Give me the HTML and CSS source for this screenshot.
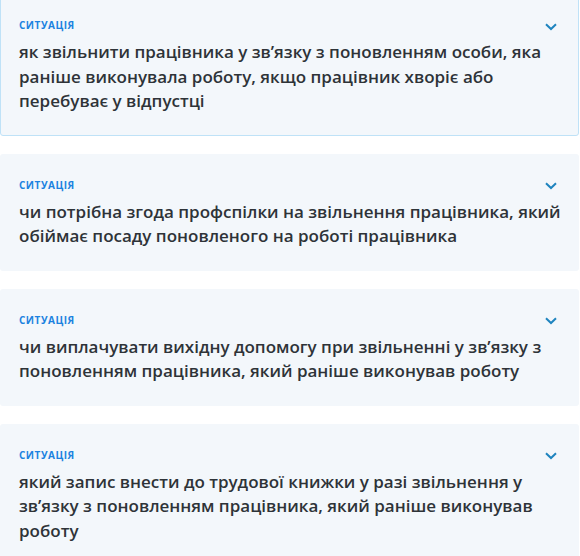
FILE: index.html
```html
<!DOCTYPE html>
<html lang="uk">
<head>
<meta charset="utf-8">
<link rel="stylesheet" href="styles.css">
</head>
<body>
<div class="list">
  <div class="card card-active">
    <div class="head">
      <span class="label">Ситуація</span>
      <svg class="chev" width="12" height="8" viewBox="0 0 12 8"><path d="M1 1.2 L6 6 L11 1.2" fill="none" stroke="#1f84bf" stroke-width="2"/></svg>
    </div>
    <div class="title">як звільнити працівника у зв’язку з поновленням особи, яка раніше виконувала роботу, якщо працівник хворіє або перебуває у відпустці</div>
  </div>
  <div class="card">
    <div class="head">
      <span class="label">Ситуація</span>
      <svg class="chev" width="12" height="8" viewBox="0 0 12 8"><path d="M1 1.2 L6 6 L11 1.2" fill="none" stroke="#1f84bf" stroke-width="2"/></svg>
    </div>
    <div class="title">чи потрібна згода профспілки на звільнення працівника, який обіймає посаду поновленого на роботі працівника</div>
  </div>
  <div class="card">
    <div class="head">
      <span class="label">Ситуація</span>
      <svg class="chev" width="12" height="8" viewBox="0 0 12 8"><path d="M1 1.2 L6 6 L11 1.2" fill="none" stroke="#1f84bf" stroke-width="2"/></svg>
    </div>
    <div class="title">чи виплачувати вихідну допомогу при звільненні у зв’язку з поновленням працівника, який раніше виконував роботу</div>
  </div>
  <div class="card">
    <div class="head">
      <span class="label">Ситуація</span>
      <svg class="chev" width="12" height="8" viewBox="0 0 12 8"><path d="M1 1.2 L6 6 L11 1.2" fill="none" stroke="#1f84bf" stroke-width="2"/></svg>
    </div>
    <div class="title">який запис внести до трудової книжки у разі звільнення у зв’язку з поновленням працівника, який раніше виконував роботу</div>
  </div>
</div>
</body>
</html>
```
FILE: styles.css
```css
html, body {
  margin: 0;
  padding: 0;
  background: #ffffff;
}
body {
  font-family: "Open Sans", "Noto Sans", sans-serif;
  overflow: hidden;
}
.list {
  width: 579px;
  margin-top: -5.5px;
  display: flex;
  flex-direction: column;
  gap: 18px;
}
.card {
  background: #f3f7fb;
  border: 1px solid transparent;
  border-radius: 3px;
  padding: 21.5px 4px 21.5px 18px;
}
.card-active {
  border-color: #bfe2f7;
}
.head {
  display: flex;
  justify-content: space-between;
  align-items: center;
  height: 16px;
  padding-right: 17px;
}
.label {
  font-size: 10px;
  font-weight: 700;
  letter-spacing: 0.5px;
  text-transform: uppercase;
  color: #1b82e0;
  line-height: 16px;
}
.chev {
  display: block;
  margin-top: 3px;
}
.title {
  margin-top: 7px;
  max-width: 549px;
  font-size: 17px;
  font-weight: 600;
  line-height: 24.5px;
  color: #2e3338;
}
```
